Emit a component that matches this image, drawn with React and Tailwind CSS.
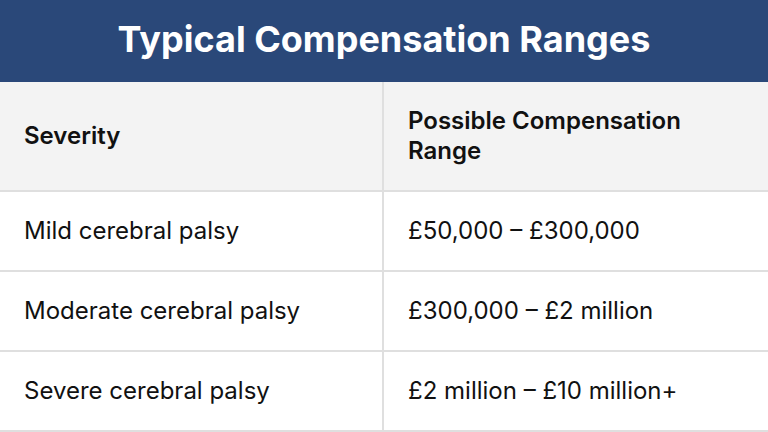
import React from "react";

const rows = [
  { severity: "Mild cerebral palsy", range: "£50,000 – £300,000" },
  { severity: "Moderate cerebral palsy", range: "£300,000 – £2 million" },
  { severity: "Severe cerebral palsy", range: "£2 million – £10 million+" },
];

const App = () => {
  return (
    <div
      className="w-[768px] h-[432px] bg-white overflow-hidden"
      style={{ fontFamily: "Inter, 'Noto Sans', sans-serif" }}
    >
      <div className="h-[82px] bg-[#2a4879] flex items-center justify-center">
        <h1 className="text-white text-[36px] font-bold leading-none pb-1">
          Typical Compensation Ranges
        </h1>
      </div>
      <div className="grid grid-cols-[384px_384px]">
        <div className="h-[110px] bg-[#f3f3f3] border-r-2 border-b-2 border-[#dfdfdf] flex items-center px-6 text-[24px] font-semibold text-[#111]">
          Severity
        </div>
        <div className="h-[110px] bg-[#f3f3f3] border-b-2 border-[#dfdfdf] flex items-center px-6 text-[24px] font-semibold text-[#111] leading-[30px]">
          Possible Compensation
          <br />
          Range
        </div>
        {rows.map(({ severity, range }) => (
          <React.Fragment key={severity}>
            <div className="h-[80px] border-r-2 border-b-2 border-[#dfdfdf] flex items-center px-6 text-[24px] text-[#111]">
              {severity}
            </div>
            <div className="h-[80px] border-b-2 border-[#dfdfdf] flex items-center px-6 text-[24px] text-[#111]">
              {range}
            </div>
          </React.Fragment>
        ))}
      </div>
    </div>
  );
};

export default App;
